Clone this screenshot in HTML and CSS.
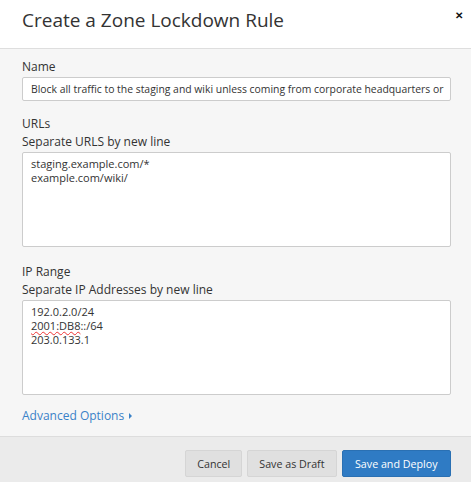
FILE: index.html
```html
<!DOCTYPE html>
<html>
<head>
<meta charset="utf-8">
<link rel="stylesheet" href="styles.css">
</head>
<body>
<div class="modal">
  <div class="header">
    <h1 class="title">Create a Zone Lockdown Rule</h1>
    <span class="close">✕</span>
  </div>
  <div class="content">
    <div class="field">
      <label class="label">Name</label>
      <div class="input">Block all traffic to the staging and wiki unless coming from corporate headquarters or</div>
    </div>
    <div class="field">
      <label class="label">URLs</label>
      <div class="label">Separate URLS by new line</div>
      <div class="textarea"><div class="line">staging.example.com/*</div><div class="line">example.com/wiki/</div></div>
    </div>
    <div class="field last">
      <label class="label">IP Range</label>
      <div class="label">Separate IP Addresses by new line</div>
      <div class="textarea"><div class="line">192.0.2.0/24</div><div class="line"><span class="spell">2001:DB8</span>::/64</div><div class="line">203.0.133.1</div></div>
    </div>
    <a class="advanced">Advanced Options <span class="caret"></span></a>
  </div>
  <div class="footer">
    <button class="btn">Cancel</button>
    <button class="btn">Save as Draft</button>
    <button class="btn primary">Save and Deploy</button>
  </div>
</div>
</body>
</html>
```
FILE: styles.css
```css
html, body { margin: 0; padding: 0; }
body {
  font-family: "Open Sans", "Liberation Sans", sans-serif;
  color: #333;
  background: #fff;
  width: 471px;
  height: 482px;
  overflow: hidden;
}
.modal { display: flex; flex-direction: column; height: 482px; }
.header {
  height: 48px;
  border-bottom: 1px solid #dedede;
  display: flex;
  justify-content: space-between;
  align-items: flex-start;
  padding: 0 8px 0 22px;
  background: #fff;
}
.title {
  margin: 7px 0 0;
  font-size: 19px;
  font-weight: 400;
  color: #333;
  line-height: 26px;
}
.close {
  font-size: 10px;
  font-weight: 700;
  margin-top: 8px;
  color: #111;
}
.content {
  flex: 1;
  background: #f6f6f6;
  padding: 9px 20px 0 22px;
}
.field { margin-bottom: 16px; }
.field:first-child { margin-bottom: 14px; }
.field.last { margin-bottom: 8px; }
.label {
  display: block;
  font-size: 12px;
  line-height: 18px;
  color: #333;
}
.input {
  margin-top: 1px;
  height: 22px;
  border: 1px solid #ccc;
  border-radius: 2px;
  background: #fff;
  font-size: 10.4px;
  line-height: 22px;
  padding: 0 8px;
  white-space: nowrap;
  overflow: hidden;
  color: #333;
}
.textarea {
  margin-top: 1px;
  height: 83px;
  border: 1px solid #ccc;
  border-radius: 2px;
  background: #fff;
  font-size: 11px;
  line-height: 14px;
  padding: 4px 8px 6px;
  color: #333;
}
.line { height: 14px; }
.spell {
  text-decoration: underline wavy #e33;
  text-decoration-thickness: 1px;
  text-underline-offset: 1px;
}
.advanced {
  display: inline-block;
  margin-top: 1px;
  font-size: 12px;
  color: #3a82c8;
  line-height: 18px;
}
.caret {
  display: inline-block;
  width: 0; height: 0;
  border-top: 3px solid transparent;
  border-bottom: 3px solid transparent;
  border-left: 3px solid #3a82c8;
  margin-left: 2px;
  vertical-align: 1px;
}
.footer {
  height: 46px;
  background: #ebebeb;
  border-top: 1px solid #ddd;
  display: flex;
  justify-content: flex-end;
  align-items: flex-start;
  gap: 5px;
  padding: 13px 20px 0 0;
  box-sizing: border-box;
}
.btn {
  font-family: "Open Sans", "Liberation Sans", sans-serif;
  font-size: 10.7px;
  height: 27px;
  padding: 0 11px;
  border: 1px solid #d5d5d5;
  border-radius: 2px;
  background: #e0e0e0;
  color: #333;
}
.btn.primary {
  padding: 0 12.5px;
  background: #2f7bc4;
  border-color: #2a70b3;
  color: #fff;
}
```
